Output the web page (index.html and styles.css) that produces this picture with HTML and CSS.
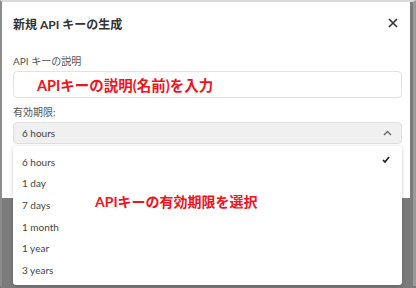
FILE: index.html
```html
<!DOCTYPE html>
<html lang="ja">
<head>
  <meta charset="UTF-8" />
  <title>新規 API キーの生成</title>
  <link rel="stylesheet" href="styles.css">
</head>
<body>
  <div class="screen">
    <div class="modal">
      <div class="modal-header">
        <h3>新規 API キーの生成</h3>
        <button class="close-btn" aria-label="close">
          <svg width="10" height="10" viewBox="0 0 10 10"><path d="M1 1L9 9M9 1L1 9" stroke="#333" stroke-width="1.6" fill="none"/></svg>
        </button>
      </div>

      <div class="modal-body">
        <label class="field-label">API キーの説明</label>
        <div class="text-input">
          <span class="note">APIキーの説明(名前)を入力</span>
        </div>

        <label class="field-label expiry-label">有効期限:</label>
        <div class="select-wrap">
          <div class="select">
            <span>6 hours</span>
            <svg width="9" height="6" viewBox="0 0 9 6"><path d="M1 5L4.5 1.5L8 5" stroke="#666" stroke-width="1.4" fill="none"/></svg>
          </div>

          <!-- open dropdown menu -->
          <ul class="menu">
            <li class="selected">6 hours
              <svg width="8" height="7" viewBox="0 0 8 7"><path d="M1 4L3 6L7 1" stroke="#222" stroke-width="1.7" fill="none"/></svg>
            </li>
            <li>1 day</li>
            <li>7 days <span class="note note-menu">APIキーの有効期限を選択</span></li>
            <li>1 month</li>
            <li>1 year</li>
            <li>3 years</li>
          </ul>
        </div>
      </div>
    </div>
  </div>
</body>
</html>
```

FILE: styles.css
```css
html, body {
  margin: 0;
  padding: 0;
}

body {
  width: 416px;
  height: 288px;
  overflow: hidden;
  background: #7b7b7b;
  font-family: Lato, "Noto Sans CJK JP", sans-serif;
  color: #333;
}

.screen {
  height: 286px;
  border-top: 2px solid #d9d9d9;
  border-left: 2px solid #8c8c8c;
  border-right: 3px solid #9a9a9a;
  box-sizing: border-box;
  width: 416px;
}

.modal {
  background: #fff;
  width: 408px;
  height: 196px;
}

.modal-header {
  display: flex;
  align-items: center;
  justify-content: space-between;
  height: 42px;
  padding: 0 12px 0 11px;
}

.modal-header h3 {
  margin: 0;
  font-size: 12px;
  font-weight: bold;
  color: #333;
}

.close-btn {
  border: none;
  background: none;
  padding: 0;
  display: flex;
}

.modal-body {
  padding: 10px 8px 0 11px;
}

.field-label {
  display: block;
  font-size: 10px;
  color: #555;
  line-height: 14px;
}

.text-input {
  margin-top: 3px;
  height: 25px;
  border: 1px solid #e2e2e2;
  border-radius: 4px;
  display: flex;
  align-items: center;
  padding-left: 23px;
}

.note {
  color: #f2121b;
  font-weight: bold;
  font-size: 14.5px;
}

.expiry-label {
  margin-top: 7px;
}

.select-wrap {
  position: relative;
  margin-top: 3px;
}

.select {
  height: 20px;
  background: #f0f0f0;
  border: 1px solid #e0e0e0;
  border-radius: 4px;
  display: flex;
  align-items: center;
  justify-content: space-between;
  padding: 0 9px 0 8px;
  font-size: 10px;
  color: #444;
}

.menu {
  position: absolute;
  left: 0;
  right: 0;
  top: 24px;
  margin: 0;
  padding: 5px 0 4px;
  list-style: none;
  background: #fff;
  border-radius: 3px;
  box-shadow: 0 1px 4px rgba(0, 0, 0, 0.2);
}

.menu li {
  display: flex;
  align-items: center;
  justify-content: space-between;
  height: 21.6px;
  padding: 0 12px 0 9px;
  font-size: 10px;
  color: #444;
}

.menu li.selected svg {
  margin-top: -4px;
}

.note-menu {
  position: absolute;
  left: 82px;
  margin-top: -8px;
  font-size: 14px;
}
```
